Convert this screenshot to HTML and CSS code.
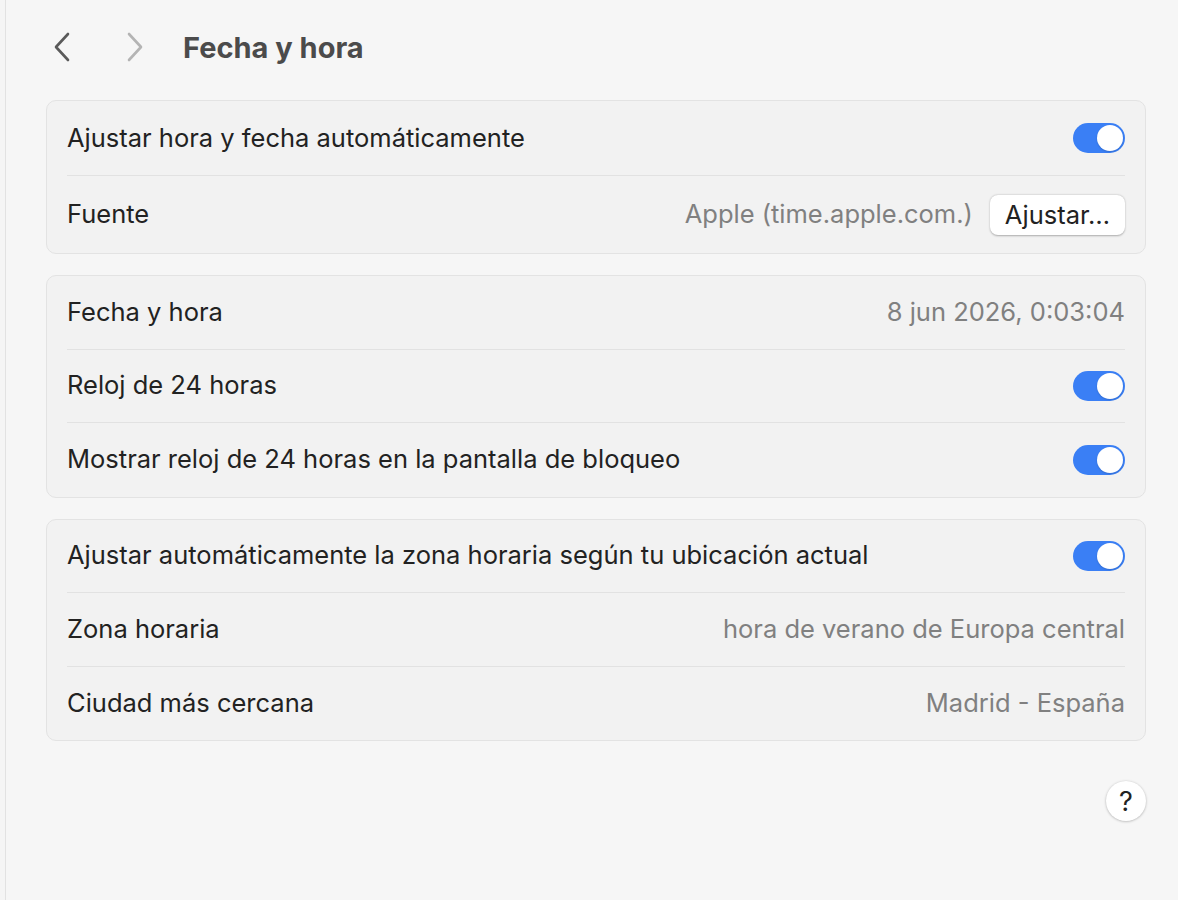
FILE: index.html
```html
<!DOCTYPE html>
<html>
	<head>
		<link rel="stylesheet" href="styles.css">
	</head>
	<body>
		<div class="window">
			<div class="toolbar">
				<span class="nav back">
					<svg width="20" height="30" viewBox="0 0 20 30"><path d="M16 2 L4 15 L16 28" fill="none" stroke="currentColor" stroke-width="2.6" stroke-linecap="round" stroke-linejoin="round"/></svg>
				</span>
				<span class="nav fwd">
					<svg width="20" height="30" viewBox="0 0 20 30"><path d="M4 2 L16 15 L4 28" fill="none" stroke="currentColor" stroke-width="2.6" stroke-linecap="round" stroke-linejoin="round"/></svg>
				</span>
				<h1 class="title">Fecha y hora</h1>
			</div>
			<div class="content">
				<div class="card">
					<div class="row">
						<span class="label">Ajustar hora y fecha automáticamente</span>
						<span class="toggle"></span>
					</div>
					<div class="row tall">
						<span class="label">Fuente</span>
						<span class="value">Apple (time.apple.com.)</span>
						<button class="btn">Ajustar…</button>
					</div>
				</div>
				<div class="card">
					<div class="row">
						<span class="label">Fecha y hora</span>
						<span class="value">8 jun 2026, 0:03:04</span>
					</div>
					<div class="row">
						<span class="label">Reloj de 24 horas</span>
						<span class="toggle"></span>
					</div>
					<div class="row">
						<span class="label">Mostrar reloj de 24 horas en la pantalla de bloqueo</span>
						<span class="toggle"></span>
					</div>
				</div>
				<div class="card">
					<div class="row">
						<span class="label">Ajustar automáticamente la zona horaria según tu ubicación actual</span>
						<span class="toggle"></span>
					</div>
					<div class="row">
						<span class="label">Zona horaria</span>
						<span class="value">hora de verano de Europa central</span>
					</div>
					<div class="row">
						<span class="label">Ciudad más cercana</span>
						<span class="value">Madrid - España</span>
					</div>
				</div>
				<div class="footer">
					<button class="help">?</button>
				</div>
			</div>
		</div>
	</body>
</html>
```
FILE: styles.css
```css
*{
	margin: 0;
	padding: 0;
	box-sizing: border-box;
}
body{
	background-color: #f5f5f5;
	font-family: Inter, "Noto Sans", sans-serif;
	color: #222;
	width: 1178px;
	height: 900px;
	overflow: hidden;
}
.window{
	height: 900px;
	margin-left: 5px;
	border-left: 1px solid #e2e2e2;
	background-color: #f6f6f6;
}
.toolbar{
	display: flex;
	align-items: center;
	height: 96px;
	padding-left: 46px;
	padding-bottom: 2px;
}
.nav{
	display: flex;
	width: 20px;
	height: 30px;
}
.back{
	color: #5a5a5a;
}
.fwd{
	color: #b4b4b4;
	margin-left: 53px;
}
.title{
	font-size: 29px;
	font-weight: 700;
	color: #4b4b4b;
	margin-left: 38px;
}
.content{
	padding: 4px 32px 0 40px;
}
.card{
	background-color: #f2f2f2;
	border: 1px solid #e3e3e3;
	border-radius: 10px;
	padding: 0 20px;
	margin-bottom: 21px;
}
.row{
	display: flex;
	align-items: center;
	height: 73.5px;
	padding-bottom: 2px;
	border-bottom: 1px solid #e2e2e2;
}
.card:first-child .row{
	height: 75px;
}
.card:first-child .row.tall{
	height: 77px;
}
.row:last-child{
	border-bottom: none;
}
.label{
	flex: 1;
	font-size: 25.5px;
}
.value{
	font-size: 25.5px;
	color: #808080;
}
.toggle{
	position: relative;
	width: 52px;
	height: 30px;
	margin-top: 2px;
	border-radius: 15px;
	background-color: #3a7ff5;
}
.toggle::after{
	content: "";
	position: absolute;
	right: 2px;
	top: 2px;
	width: 26px;
	height: 26px;
	border-radius: 50%;
	background-color: #fff;
	box-shadow: 0 1px 2px rgba(0,0,0,0.15);
}
.btn{
	margin-left: 17px;
	margin-top: 2px;
	height: 40px;
	padding: 0 15px;
	font-family: inherit;
	font-size: 25.5px;
	color: #222;
	background-color: #fff;
	border: none;
	border-radius: 8px;
	box-shadow: 0 0.5px 2px rgba(0,0,0,0.3);
}
.footer{
	display: flex;
	justify-content: flex-end;
	padding-top: 19px;
}
.help{
	width: 40px;
	height: 40px;
	border-radius: 50%;
	border: none;
	background-color: #fff;
	box-shadow: 0 0.5px 2.5px rgba(0,0,0,0.3);
	font-family: inherit;
	font-size: 27px;
	font-weight: 400;
	color: #222;
}
```
